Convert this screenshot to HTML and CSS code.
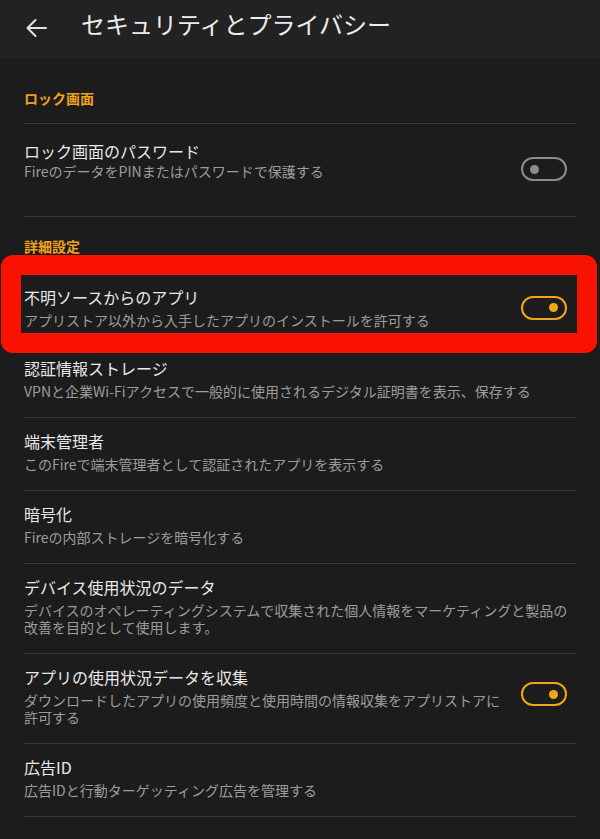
FILE: index.html
```html
<!DOCTYPE html>
<html lang="ja">
<head>
<meta charset="utf-8">
<title>セキュリティとプライバシー</title>
<link rel="stylesheet" href="styles.css">
</head>
<body>
<header class="appbar">
  <svg class="back" width="22" height="20" viewBox="0 0 22 20" aria-hidden="true">
    <path d="M21 10H2.5M10.5 2L2.5 10L10.5 18" fill="none" stroke="#e2e2e2" stroke-width="2" stroke-linecap="round" stroke-linejoin="round"/>
  </svg>
  <h1 class="appbar-title">セキュリティとプライバシー</h1>
</header>
<main class="list">
  <div class="section-title section-first">ロック画面</div>
  <div class="item item-lock">
    <div class="item-text">
      <div class="item-title">ロック画面のパスワード</div>
      <div class="item-sub sub-tight">FireのデータをPINまたはパスワードで保護する</div>
    </div>
    <span class="toggle"></span>
  </div>
  <div class="section-title section-second">詳細設定</div>
  <div class="item item-marked">
    <div class="item-text">
      <div class="item-title">不明ソースからのアプリ</div>
      <div class="item-sub">アプリストア以外から入手したアプリのインストールを許可する</div>
    </div>
    <span class="toggle toggle-on"></span>
    <span class="annotation"></span>
  </div>
  <div class="item">
    <div class="item-text">
      <div class="item-title">認証情報ストレージ</div>
      <div class="item-sub">VPNと企業Wi-Fiアクセスで一般的に使用されるデジタル証明書を表示、保存する</div>
    </div>
  </div>
  <div class="item">
    <div class="item-text">
      <div class="item-title">端末管理者</div>
      <div class="item-sub">このFireで端末管理者として認証されたアプリを表示する</div>
    </div>
  </div>
  <div class="item">
    <div class="item-text">
      <div class="item-title">暗号化</div>
      <div class="item-sub">Fireの内部ストレージを暗号化する</div>
    </div>
  </div>
  <div class="item">
    <div class="item-text">
      <div class="item-title">デバイス使用状況のデータ</div>
      <div class="item-sub">デバイスのオペレーティングシステムで収集された個人情報をマーケティングと製品の改善を目的として使用します。</div>
    </div>
  </div>
  <div class="item">
    <div class="item-text">
      <div class="item-title">アプリの使用状況データを収集</div>
      <div class="item-sub">ダウンロードしたアプリの使用頻度と使用時間の情報収集をアプリストアに許可する</div>
    </div>
    <span class="toggle toggle-on toggle-raised"></span>
  </div>
  <div class="item">
    <div class="item-text">
      <div class="item-title">広告ID</div>
      <div class="item-sub">広告IDと行動ターゲッティング広告を管理する</div>
    </div>
  </div>
</main>
</body>
</html>
```
FILE: styles.css
```css
html, body {
  margin: 0;
  padding: 0;
}
body {
  width: 600px;
  min-height: 839px;
  background: #1c1c1c;
  font-family: "Noto Sans CJK JP", "Noto Sans", sans-serif;
  color: #e6e6e6;
  overflow: hidden;
}
.appbar {
  height: 59px;
  background: #222222;
  display: flex;
  align-items: flex-start;
  padding-left: 25px;
  box-sizing: border-box;
}
.back {
  display: block;
  margin-top: 18px;
  flex: none;
}
.appbar-title {
  margin: 12px 0 0 34px;
  font-size: 24px;
  line-height: 24px;
  font-weight: 400;
  color: #ececec;
}
.list {
  padding: 0 24px;
}
.section-title {
  font-size: 14px;
  line-height: 20px;
  font-weight: 700;
  color: #eea21c;
  border-bottom: 1px solid #383838;
}
.section-first {
  padding: 29px 0 15px;
}
.section-second {
  padding: 19px 0 17px;
}
.item {
  position: relative;
  display: flex;
  align-items: center;
  padding: 12px 0 17px;
  border-bottom: 1px solid #383838;
}
.item-marked {
  padding-bottom: 15px;
}
.item-text {
  flex: 1;
  min-width: 0;
}
.item-title {
  font-size: 16px;
  line-height: 22px;
  color: #e8e8e8;
}
.item-sub {
  margin-top: 4px;
  font-size: 14px;
  line-height: 17px;
  color: #9c9c9c;
}
.item-lock {
  align-items: flex-start;
  padding: 16px 0 35px;
}
.item-lock .toggle {
  margin-top: 17px;
}
.sub-tight {
  margin-top: 1px;
}
.toggle {
  flex: none;
  position: relative;
  width: 46px;
  height: 24px;
  box-sizing: border-box;
  border: 2.5px solid #8c8c8c;
  border-radius: 12px;
  margin: 0 9px 0 16px;
}
.toggle-raised {
  margin-bottom: 4px;
}
.toggle::after {
  content: "";
  position: absolute;
  top: 50%;
  left: 7px;
  width: 9px;
  height: 9px;
  margin-top: -4.5px;
  border-radius: 50%;
  background: #8c8c8c;
}
.toggle-on {
  border-color: #f2a516;
}
.toggle-on::after {
  left: auto;
  right: 7px;
  background: #f2a516;
}
.annotation {
  position: absolute;
  top: -19px;
  left: -23px;
  right: -21px;
  bottom: -9px;
  box-sizing: border-box;
  border: 20px solid #fa1200;
  border-radius: 12px;
  pointer-events: none;
}
```
